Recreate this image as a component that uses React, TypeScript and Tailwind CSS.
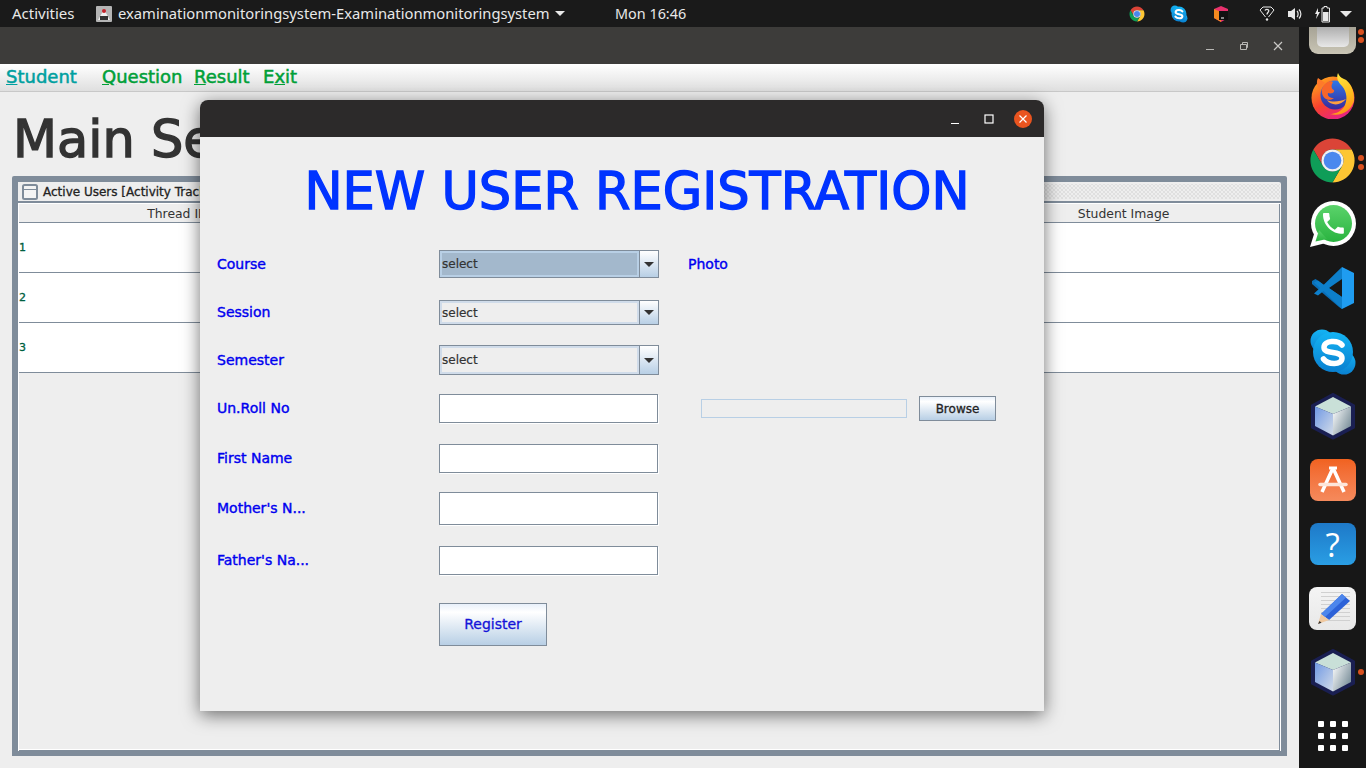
import React from "react";

const Chrome = ({ s }: { s: number }) => (
  <svg width={s} height={s} viewBox="0 0 48 48">
    <path d="M6.68 14A20 20 0 0 1 41.32 14H24A10 10 0 0 0 15.34 29Z" fill="#db4437" />
    <path d="M41.32 14A20 20 0 0 1 24 44L32.66 29A10 10 0 0 0 24 14Z" fill="#fdc633" />
    <path d="M24 44A20 20 0 0 1 6.68 14L15.34 29A10 10 0 0 0 32.66 29Z" fill="#0f9d58" />
    <circle cx="24" cy="24" r="10" fill="#f1f1f1" />
    <circle cx="24" cy="24" r="8" fill="#4a88ee" />
  </svg>
);

const Skype = ({ s }: { s: number }) => (
  <svg width={s} height={s} viewBox="0 0 48 48">
    <defs>
      <linearGradient id={`sk${s}`} x1="0" y1="0" x2="0" y2="1">
        <stop offset="0" stopColor="#14b4f4" />
        <stop offset="1" stopColor="#0a80d0" />
      </linearGradient>
    </defs>
    <circle cx="13" cy="13" r="11.5" fill={`url(#sk${s})`} />
    <circle cx="35" cy="35" r="11.5" fill={`url(#sk${s})`} />
    <circle cx="24" cy="24" r="20" fill={`url(#sk${s})`} />
    <path d="M33 17C29 12 15 12 15 19.500C15 27 33 22 33 30C33 37.500 19 37 14.500 31" fill="none" stroke="#fff" strokeWidth="5.500" strokeLinecap="round" />
  </svg>
);

const Firefox = () => (
  <svg width="44" height="46" viewBox="0 0 44 46">
    <defs>
      <linearGradient id="ffa" x1="0.2" y1="0.1" x2="0.7" y2="1">
        <stop offset="0" stopColor="#ff9a1f" />
        <stop offset="0.5" stopColor="#f8412f" />
        <stop offset="1" stopColor="#e5208a" />
      </linearGradient>
      <linearGradient id="ffb" x1="0.4" y1="0" x2="0.7" y2="1">
        <stop offset="0" stopColor="#ffe840" />
        <stop offset="0.6" stopColor="#ffb81c" />
        <stop offset="1" stopColor="#ff8a1a" />
      </linearGradient>
      <linearGradient id="ffc" x1="0.5" y1="0" x2="0.5" y2="1">
        <stop offset="0" stopColor="#2f78e8" />
        <stop offset="1" stopColor="#3a2a9a" />
      </linearGradient>
    </defs>
    <circle cx="22" cy="25" r="21.500" fill="url(#ffa)" />
    <path d="M7 5C5 9 6 13 8 16L14 10Z" fill="#ff7a2a" />
    <circle cx="24" cy="22" r="14.500" fill="url(#ffc)" />
    <path d="M20 8C14 9 10 14 11 20C12 26 18 29 23 25C19 25 16 23 17 20C20 21 24 20 23 17C20 16 20 12 22 9Z" fill="#f8662a" />
    <path d="M16 27C20 33 30 33 35 26C30 28 22 30 16 27Z" fill="#ffa040" />
    <path d="M27 0C25 5 27 9 31 13C36 19 37 27 33 34C29 39 24 41 19 41C30 44 40 38 43 28C44 18 39 8 33 6C30 5 28 3 27 0Z" fill="url(#ffb)" />
  </svg>
);

const WhatsApp = () => (
  <svg width="46" height="46" viewBox="0 0 46 46">
    <circle cx="23.500" cy="22.500" r="22.500" fill="#fff" />
    <path d="M0 46L5 30L16 42Z" fill="#fff" />
    <defs>
      <linearGradient id="wa" x1="0" y1="0" x2="0" y2="1">
        <stop offset="0" stopColor="#5bd36b" />
        <stop offset="1" stopColor="#29b33f" />
      </linearGradient>
    </defs>
    <circle cx="23.500" cy="22.500" r="18.500" fill="url(#wa)" />
    <path d="M5.500 40.500L9 29L17 38Z" fill="url(#wa)" />
    <g transform="translate(9.500 8.500) scale(1.16)">
      <path d="M6.600 10.800c1.400 2.800 3.800 5.100 6.600 6.600l2.200-2.200c.3-.3.700-.4 1-.2 1.100.4 2.300.6 3.600.6.600 0 1 .4 1 1V20c0 .6-.4 1-1 1C10.600 21 3 13.400 3 4c0-.6.400-1 1-1h3.500c.6 0 1 .4 1 1 0 1.300.2 2.500.6 3.600.1.300 0 .7-.2 1l-2.300 2.200z" fill="#fff" />
    </g>
  </svg>
);

const VSCode = () => (
  <svg width="44" height="44" viewBox="0 0 44 44">
    <path d="M1 15L4.500 13L31 31V43L28 41L1 18Z" fill="#0a6fb8" />
    <path d="M31 1V13L18 22L31 31V43L12.500 25L7 29.500L3 27.500L9 22L3 16.500L7 14.500L12.500 19Z" fill="#0d7fcb" />
    <path d="M31 1L43 7V37L31 43Z" fill="#1f9cf0" />
  </svg>
);

const Cube = ({ id }: { id: string }) => (
  <svg width="48" height="48" viewBox="0 0 48 48">
    <defs>
      <linearGradient id={`${id}l`} x1="0" y1="0" x2="1" y2="1">
        <stop offset="0" stopColor="#6f98e4" />
        <stop offset="1" stopColor="#d3dce8" />
      </linearGradient>
      <linearGradient id={`${id}r`} x1="0" y1="0" x2="1" y2="0.700">
        <stop offset="0" stopColor="#ffffff" />
        <stop offset="1" stopColor="#7a8f9a" />
      </linearGradient>
    </defs>
    <path d="M24 2L45 13.500V35.500L24 46.500L3 35.500V13.500Z" fill="#1a1f52" stroke="#1a1f52" strokeWidth="2" strokeLinejoin="round" />
    <path d="M24 5L42 14.500L24 22L6 14.500Z" fill="#c9e0d8" />
    <path d="M6 14.500L24 22V43.500L6 34Z" fill={`url(#${id}l)`} />
    <path d="M42 14.500L24 22V43.500L42 34Z" fill={`url(#${id}r)`} />
  </svg>
);

const Software = () => (
  <div className="w-[46px] h-[42px] rounded-[8px] bg-gradient-to-b from-[#f1621f] to-[#f58a5c] flex items-center justify-center">
    <svg width="36" height="32" viewBox="0 0 36 32" fill="none" stroke="#fff">
      <path d="M18 4L7 28M18 4L29 28" strokeWidth="3.500" />
      <path d="M14 4H22" strokeWidth="3" />
      <path d="M5 20.500H31" strokeWidth="3.500" strokeLinecap="round" stroke="#fde6da" />
    </svg>
  </div>
);

const Help = () => (
  <div className="w-[46px] h-[42px] rounded-[8px] bg-gradient-to-b from-[#1e79c8] to-[#2a9ee4] flex items-center justify-center font-['Open_Sans',sans-serif] text-[33px] leading-none text-white">
    ?
  </div>
);

const Editor = () => (
  <div className="w-[47px] h-[43px] rounded-[8px] bg-gradient-to-b from-[#f4f4f4] to-[#e8e8e8] flex items-center justify-center">
    <svg width="40" height="38" viewBox="0 0 40 38">
      {[3, 7, 11, 15, 19, 23, 27, 31].map((y) => (
        <rect key={y} x="8" y={y} width="29" height="1" fill="#d0d0d0" />
      ))}
      <path d="M29 5L37 12L16 31L8 25Z" fill="#2d62d8" />
      <path d="M29 5L33 8.500L12 28L8 25Z" fill="#4d86ec" />
      <path d="M8 25L16 31L5 35Z" fill="#f0c9a0" />
      <path d="M6.500 32L5 35L8.500 33.800Z" fill="#333" />
    </svg>
  </div>
);

const Files = () => (
  <div className="w-[47px] h-[46px] mt-[-3px] rounded-[9px] bg-gradient-to-b from-[#8f8c80] to-[#c9c5b5] flex items-start justify-center">
    <div className="w-[32px] h-[39px] rounded-b-[5px] bg-gradient-to-b from-[#7a7a7a] to-[#e8e8e8]" />
  </div>
);

const Dot = ({ y }: { y: number }) => (
  <span className="absolute right-[2px] w-[6px] h-[6px] rounded-full bg-[#d9501e]" style={{ top: y }} />
);

const Dock = () => (
  <aside className="w-[67px] h-[741px] bg-[#171717] overflow-hidden">
    <div className="mt-[-27px] flex flex-col">
      <div className="relative h-[64px] flex items-center justify-center"><Files /><Dot y={29} /><Dot y={37} /></div>
      <div className="h-[64px] flex items-center justify-center"><Firefox /></div>
      <div className="relative h-[64px] flex items-center justify-center"><Chrome s={53} /><Dot y={27} /><Dot y={36} /></div>
      <div className="h-[64px] flex items-center justify-center"><WhatsApp /></div>
      <div className="h-[64px] flex items-center justify-center"><VSCode /></div>
      <div className="h-[64px] flex items-center justify-center"><Skype s={48} /></div>
      <div className="h-[64px] flex items-center justify-center"><Cube id="c1" /></div>
      <div className="h-[64px] flex items-center justify-center"><Software /></div>
      <div className="h-[64px] flex items-center justify-center"><Help /></div>
      <div className="h-[64px] flex items-center justify-center"><Editor /></div>
      <div className="relative h-[64px] flex items-center justify-center"><Cube id="c2" /><Dot y={29} /></div>
      <div className="h-[64px] flex items-center justify-center">
        <div className="grid grid-cols-3 gap-[6px]">
          {Array.from({ length: 9 }).map((_, i) => (
            <span key={i} className="w-[6px] h-[6px] rounded-[1px] bg-white" />
          ))}
        </div>
      </div>
    </div>
  </aside>
);

const TopBar = () => (
  <header className="h-[27px] bg-[#1a1a1a] text-[#e8e8e8] flex items-center text-[14.75px] font-['Noto_Sans',sans-serif]">
    <span className="ml-[12px] w-[84px] text-[15px]">Activities</span>
    <svg width="16" height="16" viewBox="0 0 16 16" className="mr-[6px]">
      <rect width="16" height="16" rx="1" fill="#b5b5b5" />
      <path d="M2 14L6 7L8 3L10 7L14 14Z" fill="#f0f0f0" />
      <circle cx="8" cy="5" r="2" fill="#c5222a" />
      <path d="M4 10H12V14H4Z" fill="#333" />
    </svg>
    <span className="w-[432px] whitespace-nowrap">examinationmonitoringsystem-Examinationmonitoringsystem</span>
    <svg width="10" height="5" viewBox="0 0 10 5" className="ml-[5px]"><path d="M0 0H10L5 5Z" fill="#e8e8e8" /></svg>
    <span className="ml-[50px] whitespace-nowrap text-[14.4px]">Mon 16:46</span>
    <div className="flex-1" />
    <div className="w-[18px] flex justify-center"><Chrome s={20} /></div>
    <div className="w-[18px] ml-[24px] flex justify-center"><Skype s={18} /></div>
    <svg width="16" height="16" viewBox="0 0 16 16" className="ml-[25px]">
      <path d="M8 0L15 3V12L8 16L1 12V3Z" fill="#e8316e" />
      <path d="M1 3L8 6V16L1 12Z" fill="#f58a1f" />
      <path d="M6 5H15V14H6Z" fill="#111" />
      <path d="M8 12H11" stroke="#fff" />
    </svg>
    <svg width="16" height="16" viewBox="0 0 16 16" fill="none" stroke="#e8e8e8" className="ml-[30px]">
      <path d="M1 4L4 1H12L15 4L9.500 11M6.500 11L1 4" />
      <path d="M6 4.500C6.500 3 9.500 3 9.800 4.700C10 6.200 8 6.300 8 8.500" strokeWidth="1.300" />
      <circle cx="8" cy="13.500" r="1.200" fill="#e8e8e8" stroke="none" />
    </svg>
    <svg width="16" height="16" viewBox="0 0 16 16" className="ml-[12px]">
      <path d="M1 5H4L8 2V14L4 11H1Z" fill="#e8e8e8" />
      <path d="M10 5C11.500 6.500 11.500 9.500 10 11M12 3.500C14.500 6 14.500 10 12 12.500" stroke="#e8e8e8" fill="none" strokeWidth="1.200" />
    </svg>
    <svg width="16" height="18" viewBox="0 0 16 18" className="ml-[12px]">
      <path d="M3 3L0 9H2L1 14L5 7H3Z" fill="#e8e8e8" />
      <path d="M7 3H9V1.500H12V3H14.500V17H7Z" fill="none" stroke="#e8e8e8" />
      <rect x="8" y="7" width="5.500" height="9" fill="#e8e8e8" />
    </svg>
    <svg width="12" height="6" viewBox="0 0 12 6" className="ml-[9px] mr-[14px]"><path d="M0 0H12L6 6Z" fill="#e8e8e8" /></svg>
  </header>
);

const TitleBar = () => (
  <div className="h-[37px] bg-[#3d3c3a] flex items-center justify-end">
    <svg width="10" height="10" viewBox="0 0 10 10" className="mr-[24px] mt-[1px]"><path d="M1 8.500H9" stroke="#b9b8b5" /></svg>
    <svg width="10" height="10" viewBox="0 0 10 10" fill="none" stroke="#b9b8b5" className="mr-[24px]"><path d="M1.500 3.500H7.500V8.500H1.500ZM3.500 3V1.500H8.500V6.500H8" /></svg>
    <svg width="10" height="10" viewBox="0 0 10 10" className="mr-[16px]"><path d="M1 1L9 9M9 1L1 9" stroke="#c9c8c5" strokeWidth="1.200" /></svg>
  </div>
);

const MenuBar = () => (
  <nav className="h-[28px] bg-gradient-to-b from-white to-[#dfdfdf] border-b border-[#c8c8c8] flex items-center pb-[2px] text-[18px] [-webkit-text-stroke:0.5px] text-[#00a038]">
    <span className="ml-[6px] w-[96px] text-[#00a0a0]"><u>S</u>tudent</span>
    <span className="w-[92px]"><u>Q</u>uestion</span>
    <span className="w-[69px]"><u>R</u>esult</span>
    <span>E<u>x</u>it</span>
  </nav>
);

const rows = ["1", "2", "3"];

const Frame = () => (
  <section className="h-[580px] ml-[12px] mr-[12px] rounded-t-[2px] bg-[#7f8c9a] pt-[6px] pl-[6px] pr-[6px] pb-[5px] flex flex-col">
    <div className="h-[19px] shrink-0 bg-[#eeeeee] flex items-center pl-[4px] gap-[5px] rounded-tr-[2px]">
      <svg width="16" height="16" viewBox="0 0 16 16" fill="none" className="shrink-0">
        <rect x="1" y="1" width="14" height="14" rx="1.500" fill="#f4f4f4" stroke="#7f8c9a" strokeWidth="2" />
        <path d="M1 5.500H15" stroke="#7f8c9a" />
      </svg>
      <span className="text-[12px] [-webkit-text-stroke:0.3px] text-[#222] whitespace-nowrap">Active Users [Activity Tracker]</span>
      <div className="flex-1 self-stretch my-[2px] mr-[1px] ml-[8px] bg-[radial-gradient(circle,#9a9a9a_0.5px,transparent_0.75px),radial-gradient(circle,#9a9a9a_0.5px,transparent_0.75px)] bg-[length:4px_4px] bg-[position:0_0,2px_2px]" />
    </div>
    <div className="mt-[2px] flex-1 flex flex-col border-t border-l border-r border-white">
      <div className="flex-1 flex flex-col bg-[#eeeeee] border-r border-b border-[#7f8c9a] shadow-[inset_0_-1px_0_#fff]">
        <div className="grid grid-cols-4 h-[19px] pt-[1px] pl-[1px] border-b border-[#7f8c9a] text-[12.4px] text-[#333] text-center shrink-0">
          <span>Thread ID</span><span /><span /><span className="pl-[4px]">Student Image</span>
        </div>
        {rows.map((r) => (
          <div key={r} className="h-[50px] shrink-0 bg-white border-b border-[#7f8c9a] flex items-center pt-[1px] text-[11px] [-webkit-text-stroke:0.3px] text-[#006040]">{r}</div>
        ))}
      </div>
    </div>
  </section>
);

const Label = ({ children }: { children: React.ReactNode }) => (
  <span className="w-[222px] text-[14px] [-webkit-text-stroke:0.4px] text-[#0000f0] shrink-0">{children}</span>
);

const Select = ({ h, active }: { h: string; active?: boolean }) => (
  <div className={`${h} w-[220px] border border-[#7f8c9a] flex`}>
    <div className={`flex-1 border-2 flex items-center text-[12px] [-webkit-text-stroke:0.2px] text-[#333] ${active ? "bg-[#a3b8cc] border-[#b8cfe5]" : "bg-[#eeeeee] border-[#d0dcea]"}`}>select</div>
    <div className="w-[19px] border-l border-[#7f8c9a] bg-gradient-to-b from-white to-[#b8cfe5] flex items-center justify-center">
      <svg width="10" height="5" viewBox="0 0 10 5"><path d="M0 0H10L5 5Z" fill="#333" /></svg>
    </div>
  </div>
);

const Field = ({ h }: { h: string }) => (
  <div className={`${h} w-[219px] bg-white border border-[#7f8c9a] shadow-[1px_1px_0_#fff]`} />
);

const Dialog = () => (
  <div className="absolute left-[200px] top-[100px] w-[844px] h-[611px] bg-[#eeeeee] rounded-t-[8px] shadow-[0_4px_18px_rgba(0,0,0,0.55)] flex flex-col">
    <div className="h-[37px] shrink-0 bg-[#2c2a2a] rounded-t-[8px] flex items-center justify-end">
      <svg width="10" height="10" viewBox="0 0 10 10" className="mr-[24px] mt-[2px]"><path d="M1 8.500H9" stroke="#fff" /></svg>
      <svg width="10" height="10" viewBox="0 0 10 10" className="mr-[20px]"><rect x="1" y="1" width="8" height="8" fill="none" stroke="#fff" strokeWidth="1.200" /></svg>
      <div className="w-[18px] h-[18px] mr-[12px] rounded-full bg-[#e9541f] flex items-center justify-center">
        <svg width="10" height="10" viewBox="0 0 10 10"><path d="M1.500 1.500L8.500 8.500M8.500 1.500L1.500 8.500" stroke="#fff" strokeWidth="1.200" /></svg>
      </div>
    </div>
    <h1 className="mt-[25px] h-[60px] text-center text-[51px] leading-[60px] [-webkit-text-stroke:1.4px] font-normal text-[#0033ff] ml-[30px] whitespace-nowrap">NEW USER REGISTRATION</h1>
    <div className="flex mt-[28px] pl-[17px]">
      <div className="w-[442px] shrink-0 flex flex-col">
        <div className="flex items-center"><Label>Course</Label><Select h="h-[28px]" active /></div>
        <div className="flex items-center mt-[22px]"><Label>Session</Label><Select h="h-[25px]" /></div>
        <div className="flex items-center mt-[20px]"><Label>Semester</Label><Select h="h-[30px]" /></div>
        <div className="flex items-center mt-[19px]"><Label>Un.Roll No</Label><Field h="h-[29px]" /></div>
        <div className="flex items-center mt-[21px]"><Label>First Name</Label><Field h="h-[29px]" /></div>
        <div className="flex items-center mt-[19px]"><Label>Mother's N...</Label><Field h="h-[33px]" /></div>
        <div className="flex items-center mt-[21px]"><Label>Father's Na...</Label><Field h="h-[29px]" /></div>
        <div className="flex mt-[28px] pl-[222px]">
          <button className="w-[108px] h-[43px] border border-[#7f8c9a] bg-gradient-to-b from-[#e8f0fa] via-white via-20% to-[#b8cfe5] text-[14px] [-webkit-text-stroke:0.3px] text-[#1414d8]">Register</button>
        </div>
      </div>
      <div className="flex flex-col pl-[29px]">
        <span className="h-[28px] flex items-center text-[14px] [-webkit-text-stroke:0.4px] text-[#0000f0]">Photo</span>
        <div className="flex items-center mt-[118px] pl-[13px]">
          <div className="w-[206px] h-[19px] border border-[#b8cfe5] bg-[#eeeeee]" />
          <button className="ml-[12px] w-[77px] h-[25px] border border-[#7f8c9a] bg-gradient-to-b from-[#e8f0fa] via-white via-20% to-[#b8cfe5] text-[12px] [-webkit-text-stroke:0.3px] text-[#222]">Browse</button>
        </div>
      </div>
    </div>
  </div>
);

export default function App() {
  return (
    <div className="relative w-[1366px] h-[768px] overflow-hidden bg-[#eeeeee] font-['DejaVu_Sans',sans-serif]">
      <TopBar />
      <div className="flex h-[741px]">
        <main className="w-[1299px] flex flex-col">
          <TitleBar />
          <MenuBar />
          <div className="flex-1 flex flex-col">
            <div className="h-[84px] shrink-0 pl-[13px] pt-[18px] text-[51px] leading-[60px] [-webkit-text-stroke:1.4px] text-[#333] whitespace-nowrap">Main Server</div>
            <Frame />
          </div>
        </main>
        <Dock />
      </div>
      <Dialog />
    </div>
  );
}
